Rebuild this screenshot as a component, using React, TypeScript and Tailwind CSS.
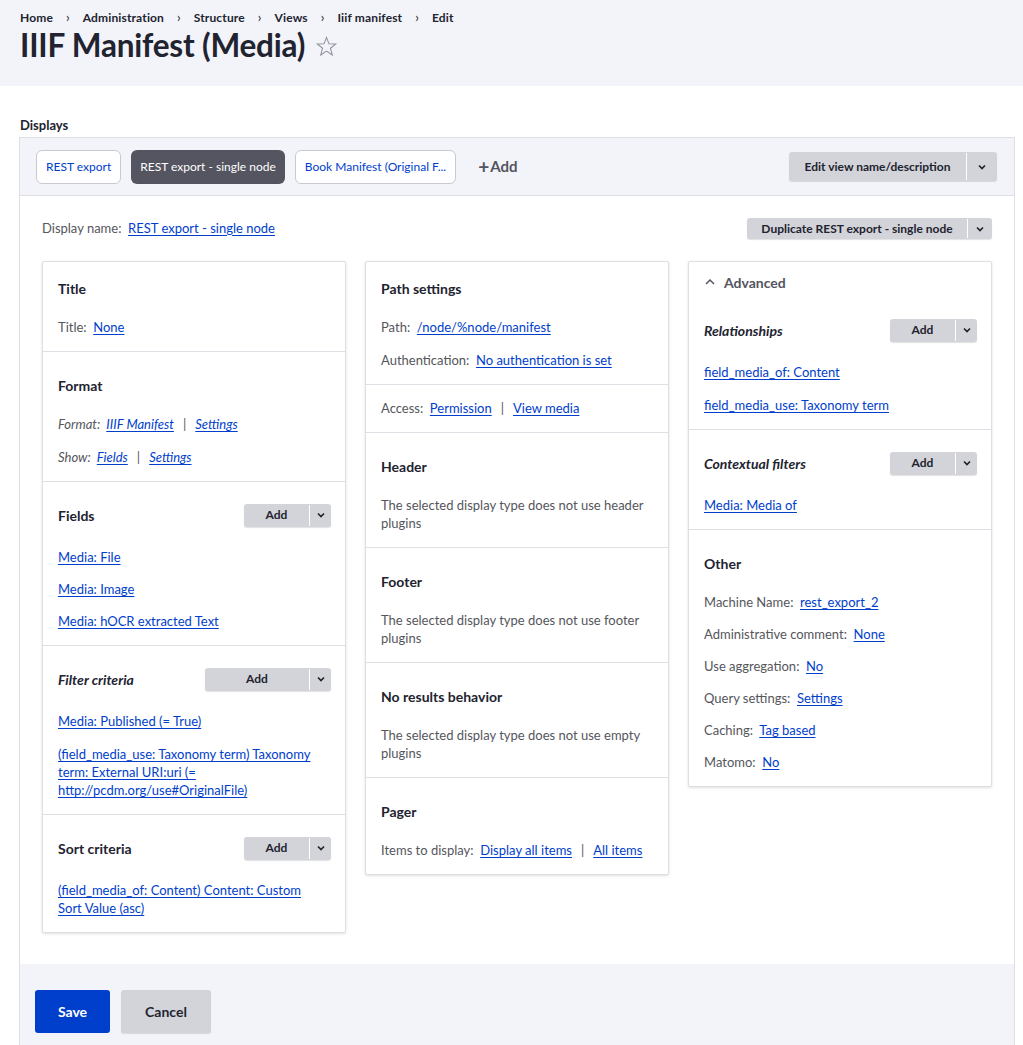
import React from "react";

const FONT = { fontFamily: "Lato, 'Noto Sans', 'Liberation Sans', sans-serif" };

function Chevron({ cls = "w-[10px] h-[10px]" }: { cls?: string }) {
  return (
    <svg viewBox="0 0 10 10" className={cls} fill="none" stroke="#222330" strokeWidth="1.7">
      <polyline points="2,3.5 5,6.5 8,3.5" />
    </svg>
  );
}

function AddBtn({ wide = false }: { wide?: boolean }) {
  return (
    <div className="flex h-[23px] rounded-[3px] bg-[#d3d4d9] shadow-[0_1px_1px_rgba(0,0,0,0.12)] text-[12px] font-bold text-[#222330]">
      <div className={`${wide ? "w-[104px]" : "w-[65px]"} flex items-center justify-center`}>Add</div>
      <div className="w-px bg-white my-[1px]" />
      <div className="w-[21px] flex items-center justify-center">
        <Chevron />
      </div>
    </div>
  );
}

function Lnk({ children }: { children: React.ReactNode }) {
  return <a className="text-[#003ecc] underline underline-offset-2 cursor-pointer">{children}</a>;
}

function Section({
  title,
  italic = false,
  first = false,
  btn,
  children,
  gap = "gap-[15px]",
}: {
  title?: string;
  italic?: boolean;
  first?: boolean;
  btn?: "add" | "wide";
  children?: React.ReactNode;
  gap?: string;
}) {
  return (
    <div className={`pl-[15px] pr-[14px] ${first ? "pt-2" : "pt-[15px]"} pb-[15px] border-b border-[#dedfe4] last:border-b-0`}>
      {title && (
        <div className="h-9 flex items-center justify-between">
          <div className={`text-[14px] font-bold text-[#222330] ${italic ? "italic" : ""}`}>{title}</div>
          {btn && <AddBtn wide={btn === "wide"} />}
        </div>
      )}
      <div className={`flex flex-col ${gap} ${title ? (btn ? "mt-[15px]" : "mt-3") : ""} text-[13px] leading-[18px] text-[#55565b]`}>
        {children}
      </div>
    </div>
  );
}

function Card({ children }: { children: React.ReactNode }) {
  return (
    <div className="bg-white border border-[#dedfe4] rounded-[2px] shadow-[0_1px_3px_rgba(0,0,0,0.12)]">{children}</div>
  );
}

function Row({ label, children }: { label: string; children: React.ReactNode }) {
  return (
    <div>
      <span>{label}:</span>&nbsp;&nbsp;{children}
    </div>
  );
}

function Sep() {
  return <span className="mx-[9px] text-[#55565b]">|</span>;
}

export default function App() {
  return (
    <div style={FONT} className="min-h-[1045px] bg-white text-[#222330]">
      {/* Header */}
      <div className="h-[86px] bg-[#f3f4f9] pl-5 pt-[11px]">
        <div className="flex items-center text-[12px] font-bold text-[#222330] h-[14px]">
          {["Home", "Administration", "Structure", "Views", "Iiif manifest"].map((b) => (
            <React.Fragment key={b}>
              <span className="tracking-[0.15px]">{b}</span>
              <span className="mx-[13px] font-normal text-[13px]">›</span>
            </React.Fragment>
          ))}
          <span className="tracking-[0.15px]">Edit</span>
        </div>
        <div className="flex items-center mt-[1px] h-[40px]">
          <h1 className="text-[31.5px] font-bold tracking-[-0.2px] text-[#222330]">IIIF Manifest (Media)</h1>
          <svg viewBox="0 0 24 24" className="ml-[10px] w-[23px] h-[23px]" fill="none" stroke="#8e929c" strokeWidth="1.1">
            <polygon points="12,2.5 14.6,9.2 21.6,9.4 16.1,13.8 18,20.8 12,16.8 6,20.8 7.9,13.8 2.4,9.4 9.4,9.2" />
          </svg>
        </div>
      </div>

      <div className="pl-5 pt-[31px] pb-[4px] text-[13px] leading-[16px] font-bold text-[#222330]">Displays</div>

      <div className="ml-[19px] w-[996px] border-x border-t border-[#dedfe4]">
        {/* Tab bar */}
        <div className="h-[58px] bg-[#f3f4f9] border-b border-[#dedfe4] flex items-center pl-4 pr-[17px]">
          <div className="flex items-center gap-[10px] text-[12px]">
            <div className="h-[34px] px-[9px] flex items-center rounded-[6px] border border-[#c9cad1] bg-white text-[#003ecc]">REST export</div>
            <div className="h-[34px] px-[9px] flex items-center rounded-[6px] bg-[#545560] text-white">REST export - single node</div>
            <div className="h-[34px] px-[9px] flex items-center rounded-[6px] border border-[#c9cad1] bg-white text-[#003ecc]">Book Manifest (Original F...</div>
            <div className="ml-[12px] flex items-center text-[15px] font-bold text-[#545560]">
              <span className="text-[19px] font-bold mr-[1px] leading-none">+</span>Add
            </div>
          </div>
          <div className="ml-auto flex h-[29px] rounded-[3px] bg-[#d3d4d9] shadow-[0_1px_1px_rgba(0,0,0,0.12)] text-[12px] font-bold">
            <div className="w-[177px] flex items-center justify-center">Edit view name/description</div>
            <div className="w-px bg-white my-[1px]" />
            <div className="w-[30px] flex items-center justify-center">
              <Chevron />
            </div>
          </div>
        </div>

        {/* Body */}
        <div className="bg-white px-[22px] pt-[22px] pb-[31px]">
          <div className="flex items-center h-[21px] text-[13px] text-[#55565b]">
            <span>Display name:</span>&nbsp;&nbsp;<Lnk>REST export - single node</Lnk>
            <div className="ml-auto flex h-[21px] rounded-[3px] bg-[#d3d4d9] shadow-[0_1px_1px_rgba(0,0,0,0.12)] text-[12px] font-bold text-[#222330]">
              <div className="w-[220px] flex items-center justify-center">Duplicate REST export - single node</div>
              <div className="w-px bg-white my-[1px]" />
              <div className="w-[24px] flex items-center justify-center">
                <Chevron />
              </div>
            </div>
          </div>

          <div className="mt-[22px] grid grid-cols-3 gap-[19px] items-start">
            {/* Column 1 */}
            <Card>
              <Section title="Title" first>
                <Row label="Title">
                  <Lnk>None</Lnk>
                </Row>
              </Section>
              <Section title="Format">
                <div className="italic">
                  <span>Format:</span>&nbsp;&nbsp;<Lnk>IIIF Manifest</Lnk>
                  <Sep />
                  <Lnk>Settings</Lnk>
                </div>
                <div className="italic">
                  <span>Show:</span>&nbsp;&nbsp;<Lnk>Fields</Lnk>
                  <Sep />
                  <Lnk>Settings</Lnk>
                </div>
              </Section>
              <Section title="Fields" btn="add" gap="gap-[14px]">
                <div><Lnk>Media: File</Lnk></div>
                <div><Lnk>Media: Image</Lnk></div>
                <div><Lnk>Media: hOCR extracted Text</Lnk></div>
              </Section>
              <Section title="Filter criteria" italic btn="wide">
                <div><Lnk>Media: Published (= True)</Lnk></div>
                <div className="pr-3">
                  <Lnk>(field_media_use: Taxonomy term) Taxonomy term: External URI:uri (= http://pcdm.org/use#OriginalFile)</Lnk>
                </div>
              </Section>
              <Section title="Sort criteria" btn="add">
                <div className="pr-6">
                  <Lnk>(field_media_of: Content) Content: Custom Sort Value (asc)</Lnk>
                </div>
              </Section>
            </Card>

            {/* Column 2 */}
            <Card>
              <Section title="Path settings" first>
                <Row label="Path">
                  <Lnk>/node/%node/manifest</Lnk>
                </Row>
                <Row label="Authentication">
                  <Lnk>No authentication is set</Lnk>
                </Row>
              </Section>
              <div className="pl-[15px] pr-[14px] pt-[14px] pb-[15px] border-b border-[#dedfe4] text-[13px] leading-[18px] text-[#55565b]">
                <span>Access:</span>&nbsp;&nbsp;<Lnk>Permission</Lnk>
                <Sep />
                <Lnk>View media</Lnk>
              </div>
              <Section title="Header">
                <div>The selected display type does not use header plugins</div>
              </Section>
              <Section title="Footer">
                <div>The selected display type does not use footer plugins</div>
              </Section>
              <Section title="No results behavior">
                <div>The selected display type does not use empty plugins</div>
              </Section>
              <Section title="Pager">
                <div>
                  <span>Items to display:</span>&nbsp;&nbsp;<Lnk>Display all items</Lnk>
                  <Sep />
                  <Lnk>All items</Lnk>
                </div>
              </Section>
            </Card>

            {/* Column 3 */}
            <Card>
              <div className="pl-[15px] pt-[11px] h-[35px]">
                <div className="flex items-center h-[18px]">
                  <svg viewBox="0 0 12 12" className="w-[12px] h-[12px] mr-[8px]" fill="none" stroke="#545560" strokeWidth="1.5">
                    <polyline points="2,8 6,4 10,8" />
                  </svg>
                  <span className="text-[14px] font-bold text-[#545560]">Advanced</span>
                </div>
              </div>
              <Section title="Relationships" italic btn="add">
                <div><Lnk>field_media_of: Content</Lnk></div>
                <div><Lnk>field_media_use: Taxonomy term</Lnk></div>
              </Section>
              <Section title="Contextual filters" italic btn="add">
                <div><Lnk>Media: Media of</Lnk></div>
              </Section>
              <Section title="Other" gap="gap-[14px]">
                <Row label="Machine Name"><Lnk>rest_export_2</Lnk></Row>
                <Row label="Administrative comment"><Lnk>None</Lnk></Row>
                <Row label="Use aggregation"><Lnk>No</Lnk></Row>
                <Row label="Query settings"><Lnk>Settings</Lnk></Row>
                <Row label="Caching"><Lnk>Tag based</Lnk></Row>
                <Row label="Matomo"><Lnk>No</Lnk></Row>
              </Section>
            </Card>
          </div>
        </div>

        {/* Actions */}
        <div className="bg-[#f3f4f9] h-[82px] pl-[15px] pt-[26px] flex items-start gap-[11px]">
          <div className="w-[75px] h-[43px] rounded-[3px] bg-[#003ecc] text-white text-[14px] font-bold flex items-center justify-center">Save</div>
          <div className="w-[90px] h-[43px] rounded-[3px] bg-[#d3d4d9] text-[#222330] text-[14px] font-bold flex items-center justify-center shadow-[0_1px_1px_rgba(0,0,0,0.12)]">Cancel</div>
        </div>
      </div>
    </div>
  );
}
